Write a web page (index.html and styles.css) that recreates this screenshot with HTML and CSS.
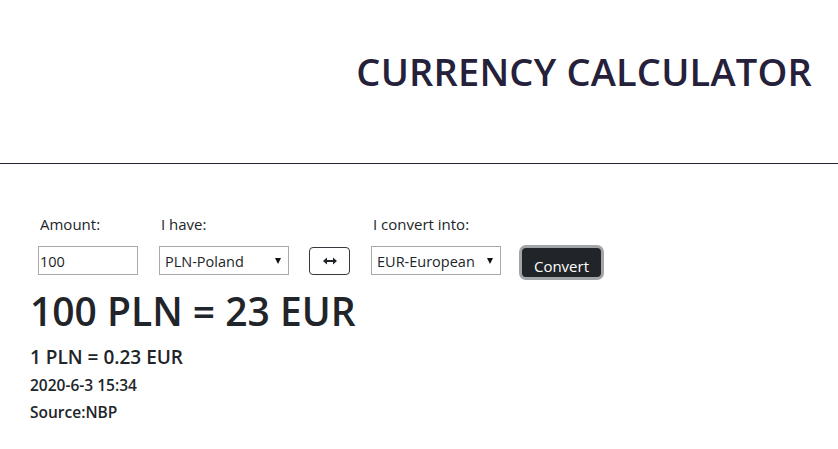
FILE: index.html
```html
<!DOCTYPE html>
<html>
<head>
<meta charset="utf-8">
<link rel="stylesheet" href="styles.css">
</head>
<body>
<header class="top">
  <h1 class="title">CURRENCY CALCULATOR</h1>
</header>
<main class="calc">
  <form class="form-row">
    <div class="field">
      <label class="lbl">Amount:</label>
      <input class="amount" type="text" value="100">
    </div>
    <div class="field">
      <label class="lbl">I have:</label>
      <span class="sel-wrap"><select class="sel"><option>PLN-Poland</option></select></span>
    </div>
    <div class="field field-swap">
      <button type="button" class="swap"><svg width="14" height="8" viewBox="0 0 14 8"><path d="M0 4 L4 0.5 V3 H10 V0.5 L14 4 L10 7.5 V5 H4 V7.5 Z" fill="#212529"/></svg></button>
    </div>
    <div class="field">
      <label class="lbl">I convert into:</label>
      <span class="sel-wrap"><select class="sel"><option>EUR-European</option></select></span>
    </div>
    <div class="field">
      <button type="button" class="convert">Convert</button>
    </div>
  </form>
  <div class="result">
    <h2 class="big">100 PLN = 23 EUR</h2>
    <h3 class="rate">1 PLN = 0.23 EUR</h3>
    <p class="meta">2020-6-3 15:34</p>
    <p class="meta">Source:NBP</p>
  </div>
</main>
</body>
</html>
```
FILE: styles.css
```css
* { box-sizing: border-box; }
body {
  margin: 0;
  font-family: "Open Sans", "Noto Sans", sans-serif;
  color: #212529;
  background: #fff;
}
.top {
  height: 164px;
  border-bottom: 1px solid #25213b;
  display: flex;
  justify-content: flex-end;
  padding-right: 26px;
}
.title {
  margin: 45px 0 0 0;
  font-size: 38px;
  font-weight: 600;
  color: #25213b;
  line-height: 52px;
  letter-spacing: 0.2px;
}
.calc {
  padding: 0 0 0 30px;
}
.form-row {
  display: flex;
  align-items: flex-end;
  gap: 21px;
  margin: 50px 0 0 8px;
}
.field {
  display: flex;
  flex-direction: column;
}
.field-swap {
  margin-left: -1px;
}
.lbl {
  font-size: 15px;
  line-height: 20px;
  margin: 0 0 12px 2px;
}
.amount {
  width: 100px;
  height: 29px;
  border: 1px solid #a9a9a9;
  font-family: "Open Sans", sans-serif;
  font-size: 14.5px;
  padding: 2px 1px 0 1px;
  color: #212529;
  outline: none;
}
.sel-wrap {
  position: relative;
  display: inline-block;
}
.sel-wrap::after {
  content: "";
  position: absolute;
  right: 8px;
  top: 12px;
  border-left: 3px solid transparent;
  border-right: 3px solid transparent;
  border-top: 6px solid #111;
  pointer-events: none;
}
.sel {
  -webkit-appearance: none;
  appearance: none;
  width: 130px;
  height: 29px;
  border: 1px solid #a9a9a9;
  border-radius: 0;
  background: #fff;
  font-family: "Open Sans", sans-serif;
  font-size: 14.5px;
  padding: 2px 0 0 5px;
  color: #212529;
}
.swap {
  width: 41px;
  height: 28px;
  border: 1px solid #343a40;
  border-radius: 4px;
  background: #fff;
  display: flex;
  align-items: center;
  justify-content: center;
  padding: 0;
}
.convert {
  width: 79px;
  height: 29px;
  margin: 0 0 -2px 0;
  background: #212529;
  color: #fff;
  border: none;
  border-radius: 4px;
  box-shadow: 0 0 0 3px #a3a6a9;
  font-family: "Open Sans", sans-serif;
  font-size: 15px;
  padding: 7px 0 0 0;
  line-height: 20px;
}
.result {
  margin-top: 11px;
}
.big {
  margin: 0;
  font-size: 39px;
  font-weight: 600;
  line-height: 50px;
}
.rate {
  margin: 8px 0 0 0;
  font-size: 19px;
  font-weight: 600;
  line-height: 26px;
}
.meta {
  margin: 4px 0 0 0;
  font-size: 15.5px;
  font-weight: 600;
  line-height: 23px;
}
```
